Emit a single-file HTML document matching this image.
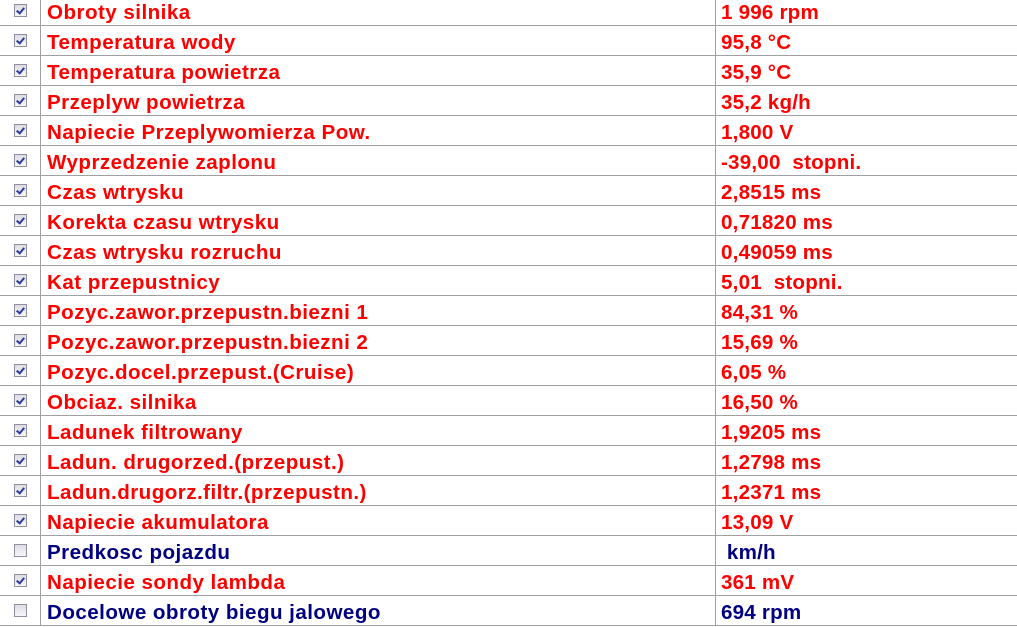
<!DOCTYPE html>
<html><head><style>
body{margin:0;width:1017px;height:614px;overflow:hidden;background:#fff;font-family:"Liberation Sans",Arial,sans-serif;}
.t{position:absolute;top:-4px;left:0;width:1030px;}
.r{height:29px;border-bottom:1px solid #a0a0a0;position:relative;font-weight:bold;font-size:20.6px;letter-spacing:0.2px;color:#f00;}
.r.b{color:#000080;}
.c1{position:absolute;left:0;top:0;width:40px;height:29px;border-right:1px solid #a0a0a0;}
.c2{position:absolute;left:47px;top:2px;line-height:29px;white-space:nowrap;letter-spacing:0.45px;}
.c3{position:absolute;left:715px;top:0;height:29px;border-left:1px solid #a0a0a0;padding-left:5px;white-space:nowrap;}
.c3 span{position:relative;top:2px;line-height:29px;}
.cb{position:absolute;left:14px;top:8px;width:11px;height:11px;border:1px solid #8f8f9f;background:linear-gradient(#dcdce4,#f6f6f8);}
.cb.k::after{content:"";position:absolute;left:3px;top:1px;width:3px;height:6px;border:solid #2a3c9a;border-width:0 2px 2px 0;transform:rotate(40deg);}
</style></head><body><div class="t">
<div class="r"><div class="c1"><div class="cb k"></div></div><div class="c2">Obroty silnika</div><div class="c3"><span>1 996 rpm</span></div></div>
<div class="r"><div class="c1"><div class="cb k"></div></div><div class="c2">Temperatura wody</div><div class="c3"><span>95,8 °C</span></div></div>
<div class="r"><div class="c1"><div class="cb k"></div></div><div class="c2">Temperatura powietrza</div><div class="c3"><span>35,9 °C</span></div></div>
<div class="r"><div class="c1"><div class="cb k"></div></div><div class="c2">Przeplyw powietrza</div><div class="c3"><span>35,2 kg/h</span></div></div>
<div class="r"><div class="c1"><div class="cb k"></div></div><div class="c2">Napiecie Przeplywomierza Pow.</div><div class="c3"><span>1,800 V</span></div></div>
<div class="r"><div class="c1"><div class="cb k"></div></div><div class="c2">Wyprzedzenie zaplonu</div><div class="c3"><span>-39,00&nbsp; stopni.</span></div></div>
<div class="r"><div class="c1"><div class="cb k"></div></div><div class="c2">Czas wtrysku</div><div class="c3"><span>2,8515 ms</span></div></div>
<div class="r"><div class="c1"><div class="cb k"></div></div><div class="c2">Korekta czasu wtrysku</div><div class="c3"><span>0,71820 ms</span></div></div>
<div class="r"><div class="c1"><div class="cb k"></div></div><div class="c2">Czas wtrysku rozruchu</div><div class="c3"><span>0,49059 ms</span></div></div>
<div class="r"><div class="c1"><div class="cb k"></div></div><div class="c2">Kat przepustnicy</div><div class="c3"><span>5,01&nbsp; stopni.</span></div></div>
<div class="r"><div class="c1"><div class="cb k"></div></div><div class="c2">Pozyc.zawor.przepustn.biezni 1</div><div class="c3"><span>84,31 %</span></div></div>
<div class="r"><div class="c1"><div class="cb k"></div></div><div class="c2">Pozyc.zawor.przepustn.biezni 2</div><div class="c3"><span>15,69 %</span></div></div>
<div class="r"><div class="c1"><div class="cb k"></div></div><div class="c2">Pozyc.docel.przepust.(Cruise)</div><div class="c3"><span>6,05 %</span></div></div>
<div class="r"><div class="c1"><div class="cb k"></div></div><div class="c2">Obciaz. silnika</div><div class="c3"><span>16,50 %</span></div></div>
<div class="r"><div class="c1"><div class="cb k"></div></div><div class="c2">Ladunek filtrowany</div><div class="c3"><span>1,9205 ms</span></div></div>
<div class="r"><div class="c1"><div class="cb k"></div></div><div class="c2">Ladun. drugorzed.(przepust.)</div><div class="c3"><span>1,2798 ms</span></div></div>
<div class="r"><div class="c1"><div class="cb k"></div></div><div class="c2">Ladun.drugorz.filtr.(przepustn.)</div><div class="c3"><span>1,2371 ms</span></div></div>
<div class="r"><div class="c1"><div class="cb k"></div></div><div class="c2">Napiecie akumulatora</div><div class="c3"><span>13,09 V</span></div></div>
<div class="r b"><div class="c1"><div class="cb"></div></div><div class="c2">Predkosc pojazdu</div><div class="c3"><span>&nbsp;km/h</span></div></div>
<div class="r"><div class="c1"><div class="cb k"></div></div><div class="c2">Napiecie sondy lambda</div><div class="c3"><span>361 mV</span></div></div>
<div class="r b"><div class="c1"><div class="cb"></div></div><div class="c2">Docelowe obroty biegu jalowego</div><div class="c3"><span>694 rpm</span></div></div>
</div></body></html>
